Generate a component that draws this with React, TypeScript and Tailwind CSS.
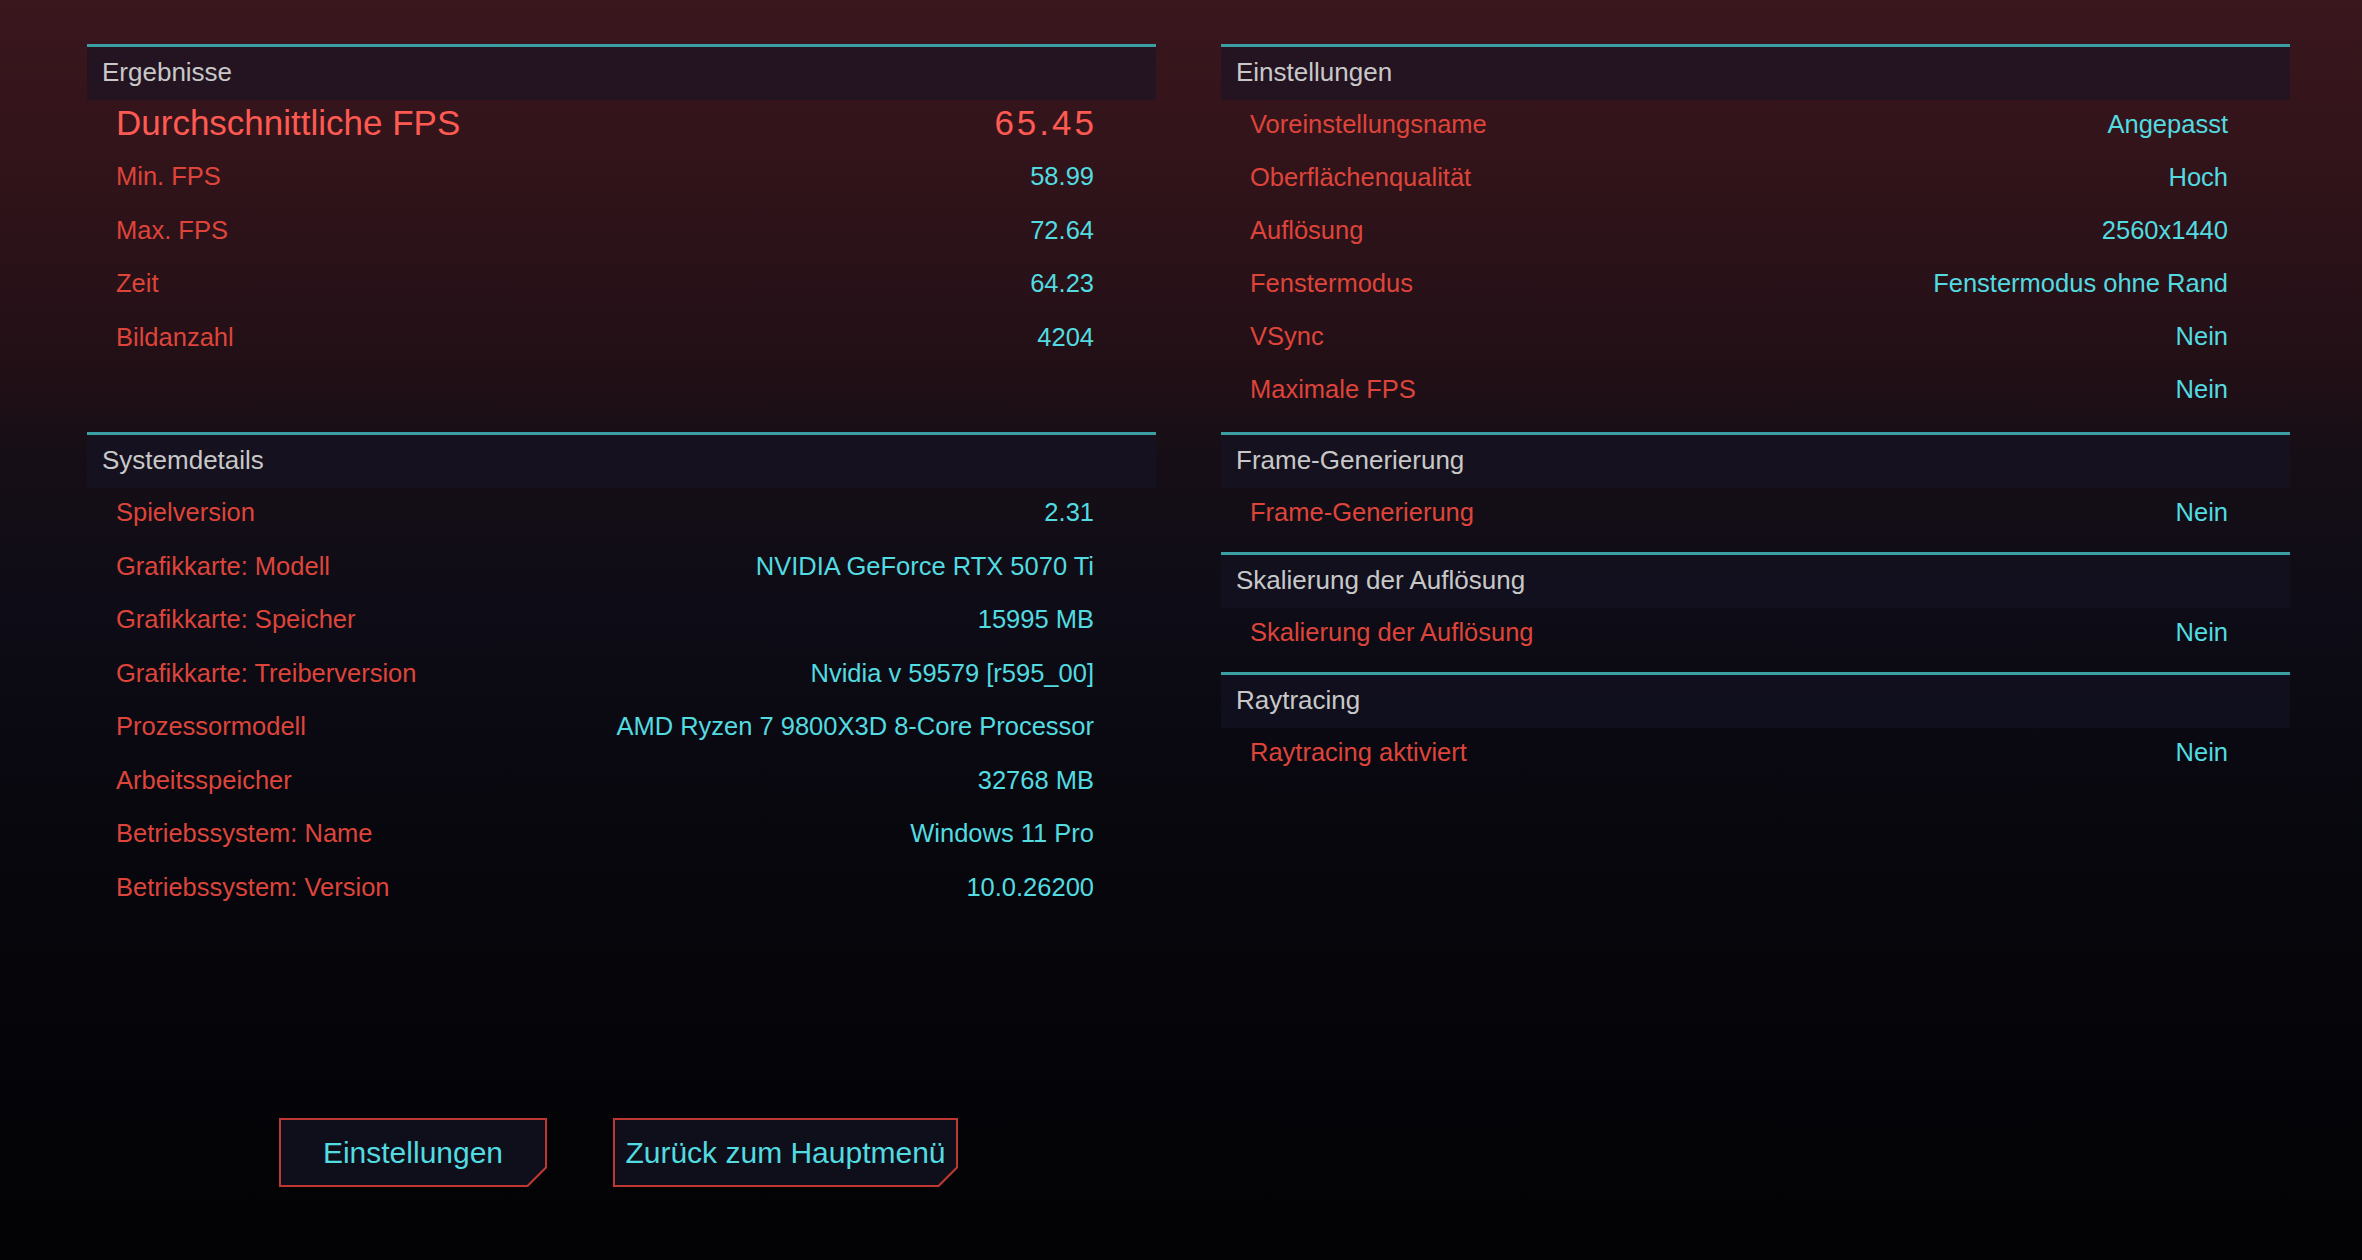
import React from "react";

type Row = [string, string];

const RowItem = ({ label, value, h }: { label: string; value: string; h: string }) => (
  <div className={`flex items-center justify-between pb-[4px] pl-[29px] pr-[62px] text-[25.5px] leading-none ${h}`}>
    <span className="text-[#de443a] whitespace-nowrap">{label}</span>
    <span className="text-[#52dbe0] whitespace-nowrap">{value}</span>
  </div>
);

const Header = ({ title }: { title: string }) => (
  <div className="h-[56px] border-t-[3px] border-[#3a9ea2] bg-[rgba(22,20,38,0.55)] flex items-center pl-[15px] pb-[4px] text-[26px] leading-none text-[#c8c8c8]">
    {title}
  </div>
);

const results: Row[] = [
  ["Min. FPS", "58.99"],
  ["Max. FPS", "72.64"],
  ["Zeit", "64.23"],
  ["Bildanzahl", "4204"],
];

const system: Row[] = [
  ["Spielversion", "2.31"],
  ["Grafikkarte: Modell", "NVIDIA GeForce RTX 5070 Ti"],
  ["Grafikkarte: Speicher", "15995 MB"],
  ["Grafikkarte: Treiberversion", "Nvidia v 59579 [r595_00]"],
  ["Prozessormodell", "AMD Ryzen 7 9800X3D 8-Core Processor"],
  ["Arbeitsspeicher", "32768 MB"],
  ["Betriebssystem: Name", "Windows 11 Pro"],
  ["Betriebssystem: Version", "10.0.26200"],
];

const settings: Row[] = [
  ["Voreinstellungsname", "Angepasst"],
  ["Oberflächenqualität", "Hoch"],
  ["Auflösung", "2560x1440"],
  ["Fenstermodus", "Fenstermodus ohne Rand"],
  ["VSync", "Nein"],
  ["Maximale FPS", "Nein"],
];

const Button = ({ label, w }: { label: string; w: string }) => (
  <div
    className={`${w} h-[69px] p-[2px] bg-[#be3732] [clip-path:polygon(0_0,100%_0,100%_calc(100%_-_19px),calc(100%_-_19px)_100%,0_100%)]`}
  >
    <div className="w-full h-full bg-[#0e0f1a] flex items-center justify-center text-[30px] leading-none text-[#52dbe0] [clip-path:polygon(0_0,100%_0,100%_calc(100%_-_18px),calc(100%_-_18px)_100%,0_100%)]">
      {label}
    </div>
  </div>
);

export default function App() {
  return (
    <div className="w-[2362px] h-[1260px] overflow-hidden flex gap-[65px] pl-[87px] pr-[72px] pt-[44px] font-['Liberation_Sans',Arial,sans-serif] bg-[linear-gradient(180deg,#3a161d_0%,#32141a_12%,#210f16_30%,#160e16_36%,#0e0c16_48%,#06060c_71%,#030305_100%)]">
      {/* Left column */}
      <div className="w-[1069px] flex flex-col">
        <div className="h-[388px] flex flex-col">
          <Header title="Ergebnisse" />
          <div className="h-[52px] pb-[8px] pl-[29px] pr-[62px] flex items-center justify-between text-[35px] leading-none text-[#ff5a52]">
            <span>Durchschnittliche FPS</span>
            <span className="tracking-[3px] mr-[-3px]">65.45</span>
          </div>
          {results.map(([l, v]) => (
            <RowItem key={l} label={l} value={v} h="h-[53.5px]" />
          ))}
        </div>
        <div className="flex flex-col">
          <Header title="Systemdetails" />
          {system.map(([l, v]) => (
            <RowItem key={l} label={l} value={v} h="h-[53.5px]" />
          ))}
        </div>
        <div className="mt-auto mb-[73px] flex justify-center gap-[66px] pr-[6px]">
          <Button label="Einstellungen" w="w-[268px]" />
          <Button label="Zurück zum Hauptmenü" w="w-[345px]" />
        </div>
      </div>

      {/* Right column */}
      <div className="w-[1069px] flex flex-col">
        <div className="flex flex-col pb-[14px]">
          <Header title="Einstellungen" />
          {settings.map(([l, v]) => (
            <RowItem key={l} label={l} value={v} h="h-[53px]" />
          ))}
        </div>
        <div className="flex flex-col pb-[11px]">
          <Header title="Frame-Generierung" />
          <RowItem label="Frame-Generierung" value="Nein" h="h-[53px]" />
        </div>
        <div className="flex flex-col pb-[11px]">
          <Header title="Skalierung der Auflösung" />
          <RowItem label="Skalierung der Auflösung" value="Nein" h="h-[53px]" />
        </div>
        <div className="flex flex-col pb-[11px]">
          <Header title="Raytracing" />
          <RowItem label="Raytracing aktiviert" value="Nein" h="h-[53px]" />
        </div>
      </div>
    </div>
  );
}
